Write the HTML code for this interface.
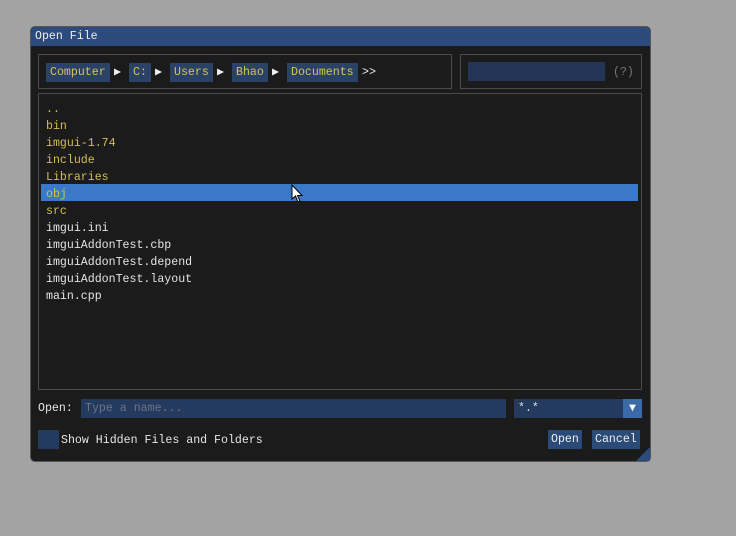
<!DOCTYPE html><html><head><style>
body{margin:0;width:736px;height:536px;background:#a3a3a3;font-family:"Liberation Mono",monospace;font-size:11.6px;position:relative;overflow:hidden}
.a{position:absolute}
.win{left:31px;top:27px;width:619px;height:434px;background:#1b1b1c;border-radius:4px;box-shadow:0 0 0 1px #555}
.tb{left:31px;top:27px;width:619px;height:19px;background:#2c4a7c;border-radius:4px 4px 0 0;color:#eee;line-height:20px}
.pn{border:1px solid #4a4a4a;box-sizing:border-box}
.bc{background:#2a4266;color:#d8c450;height:19px;line-height:20px;padding:0 4px;top:63px}
.ar{color:#eee;top:63px;line-height:20px}
.y{color:#d2bf55}.w{color:#e4e4e4}
.row{left:46px;line-height:17px}
.btn{background:#2a4a78;color:#eee;height:19px;line-height:20px;padding:0 3px;top:430px}
</style></head><body>
<div class="a win"></div>
<div class="a tb"><span style="padding-left:4px">Open File</span></div>
<div class="a pn" style="left:38px;top:54px;width:414px;height:35px"></div>
<div class="a pn" style="left:460px;top:54px;width:182px;height:35px"></div>
<div class="a bc" style="left:46px">Computer</div>
<div class="a ar" style="left:114px">▶</div>
<div class="a bc" style="left:129px">C:</div>
<div class="a ar" style="left:155px">▶</div>
<div class="a bc" style="left:170px">Users</div>
<div class="a ar" style="left:217px">▶</div>
<div class="a bc" style="left:232px">Bhao</div>
<div class="a ar" style="left:272px">▶</div>
<div class="a bc" style="left:287px">Documents</div>
<div class="a ar" style="left:362px">&gt;&gt;</div>
<div class="a" style="left:468px;top:62px;width:137px;height:19px;background:#243658"></div>
<div class="a" style="left:613px;top:63px;line-height:19px;color:#777">(?)</div>
<div class="a pn" style="left:38px;top:93px;width:604px;height:297px"></div>
<div class="a" style="left:41px;top:184px;width:597px;height:17px;background:#3a78c8"></div>
<div class="a row y" style="top:101px">..</div>
<div class="a row y" style="top:118px">bin</div>
<div class="a row y" style="top:135px">imgui-1.74</div>
<div class="a row y" style="top:152px">include</div>
<div class="a row y" style="top:169px">Libraries</div>
<div class="a row y" style="top:186px">obj</div>
<div class="a row y" style="top:203px">src</div>
<div class="a row w" style="top:220px">imgui.ini</div>
<div class="a row w" style="top:237px">imguiAddonTest.cbp</div>
<div class="a row w" style="top:254px">imguiAddonTest.depend</div>
<div class="a row w" style="top:271px">imguiAddonTest.layout</div>
<div class="a row w" style="top:288px">main.cpp</div>
<svg class="a" style="left:291px;top:184px" width="14" height="20"><path d="M1 1 L1 15 L4.5 12 L7 18 L9 17 L6.5 11.5 L11 11.5 Z" fill="#fff" stroke="#000" stroke-width="1"/></svg>
<div class="a w" style="left:38px;top:400px;line-height:17px">Open:</div>
<div class="a" style="left:81px;top:399px;width:425px;height:19px;background:#243a5e;color:#6b7488;line-height:20px;padding-left:4px;box-sizing:border-box">Type a name...</div>
<div class="a" style="left:514px;top:399px;width:109px;height:19px;background:#243a5e;color:#ddd;line-height:20px;padding-left:4px;box-sizing:border-box">*.*</div>
<div class="a" style="left:623px;top:399px;width:19px;height:19px;background:#3a6aa8;color:#fff;text-align:center;line-height:19px">▼</div>
<div class="a" style="left:38px;top:430px;width:21px;height:19px;background:#243a5e"></div>
<div class="a w" style="left:61px;top:432px;line-height:17px">Show Hidden Files and Folders</div>
<div class="a btn" style="left:548px">Open</div>
<div class="a btn" style="left:592px">Cancel</div>
<svg class="a" style="left:636px;top:447px" width="14" height="14"><path d="M14 0 L14 14 L0 14 Z" fill="#2c4a7c"/></svg>
</body></html>
